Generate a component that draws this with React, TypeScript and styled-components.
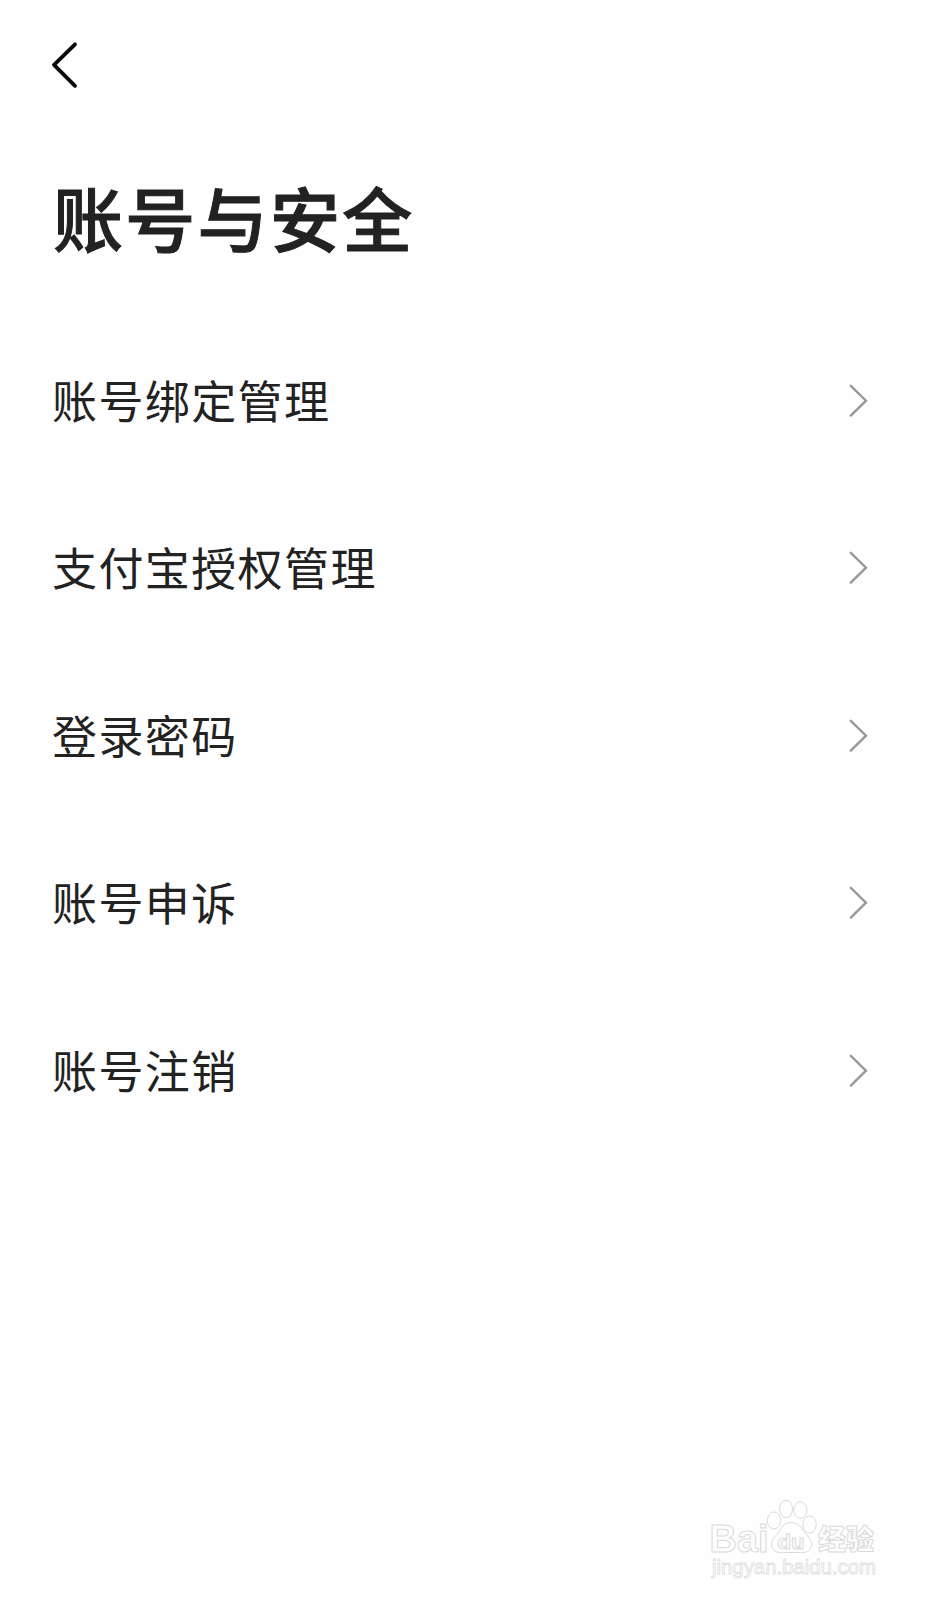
import React from "react";
import styled, { createGlobalStyle } from "styled-components";

const GlobalStyle = createGlobalStyle`
  html, body { margin: 0; padding: 0; background: #fefefe; }
  *, *::before, *::after { box-sizing: border-box; }
`;

const Screen = styled.main`
  position: relative;
  width: 927px;
  height: 1600px;
  display: flex;
  flex-direction: column;
  overflow: hidden;
  background: #fefefe;
  color: #222;
  font-family: "Noto Sans CJK SC", sans-serif;
`;

const TopBar = styled.header`
  display: flex;
  align-items: center;
  height: 130px;
  padding-left: 48px;
`;

const IconButton = styled.button`
  display: flex;
  padding: 0;
  border: 0;
  background: none;
`;

const Title = styled.h1`
  margin: 0;
  height: 187px;
  padding: 35px 0 0 53px;
  font-size: 70px;
  line-height: 104px;
  font-weight: 500;
  letter-spacing: 2.3px;
  -webkit-text-stroke: 1px #222;
`;

const List = styled.ul`
  display: flex;
  flex-direction: column;
  margin: 0;
  padding: 0;
  list-style: none;
`;

const Row = styled.li`
  display: flex;
  align-items: center;
  justify-content: space-between;
  height: 167.5px;
  padding: 0 55px 0 52px;
`;

const Label = styled.span`
  padding-bottom: 2px;
  font-size: 45px;
  line-height: 66px;
  letter-spacing: 1.4px;
`;

const Watermark = styled.svg`
  position: absolute;
  left: 700px;
  top: 1490px;
`;

const items = ["账号绑定管理", "支付宝授权管理", "登录密码", "账号申诉", "账号注销"];

const BackIcon = () => (
  <svg width="32" height="50" viewBox="0 0 32 50" fill="none" stroke="#080808" strokeWidth="3.8" strokeLinecap="round" strokeLinejoin="round">
    <path d="M27 4.3 6 24.8l21 21" />
  </svg>
);

const Chevron = () => (
  <svg width="24" height="36" viewBox="0 0 24 36" fill="none" stroke="#999" strokeWidth="2.4" strokeLinecap="round">
    <path d="M2.8 2.8 18 17.7 2.8 32.6" />
  </svg>
);

const BaiduMark = () => (
  <Watermark width="190" height="100" viewBox="0 0 190 100" fill="#fefefe" stroke="#dadada" strokeWidth="1">
    <text x="9.5" y="62" fontFamily="Liberation Sans, sans-serif" fontWeight="700" fontSize="38" textLength="59" lengthAdjust="spacingAndGlyphs">Bai</text>
    <ellipse cx="74" cy="30.5" rx="6.7" ry="8.5" />
    <ellipse cx="86" cy="19" rx="6.5" ry="8.7" />
    <ellipse cx="100.3" cy="20" rx="6.5" ry="8.2" />
    <ellipse cx="109.5" cy="34.5" rx="6.7" ry="8.5" />
    <path d="M91 32.5c-6 0-9 4-11 8-3 5-9 8-8.500 14.500 1 7 7 8 12 7.500h17c5 .5 10-1 11-7 .8-6-5-10-8.500-15-3-5-6-8-12-8Z" />
    <text x="77.500" y="59" fontFamily="Liberation Sans, sans-serif" fontWeight="700" fontSize="21" textLength="27" lengthAdjust="spacingAndGlyphs">du</text>
    <text x="118" y="60" fontFamily="Noto Sans CJK SC, sans-serif" fontWeight="900" fontSize="28">经验</text>
    <text x="12" y="84" fontFamily="Liberation Sans, sans-serif" fontSize="19.500" textLength="164" lengthAdjust="spacingAndGlyphs" strokeWidth="0.800" stroke="#e0e0e0">jingyan.baidu.com</text>
  </Watermark>
);

export default function App() {
  return (
    <>
      <GlobalStyle />
      <Screen>
        <TopBar>
          <IconButton aria-label="返回"><BackIcon /></IconButton>
        </TopBar>
        <Title>账号与安全</Title>
        <List>
          {items.map((item) => (
            <Row key={item}>
              <Label>{item}</Label>
              <Chevron />
            </Row>
          ))}
        </List>
        <BaiduMark />
      </Screen>
    </>
  );
}
